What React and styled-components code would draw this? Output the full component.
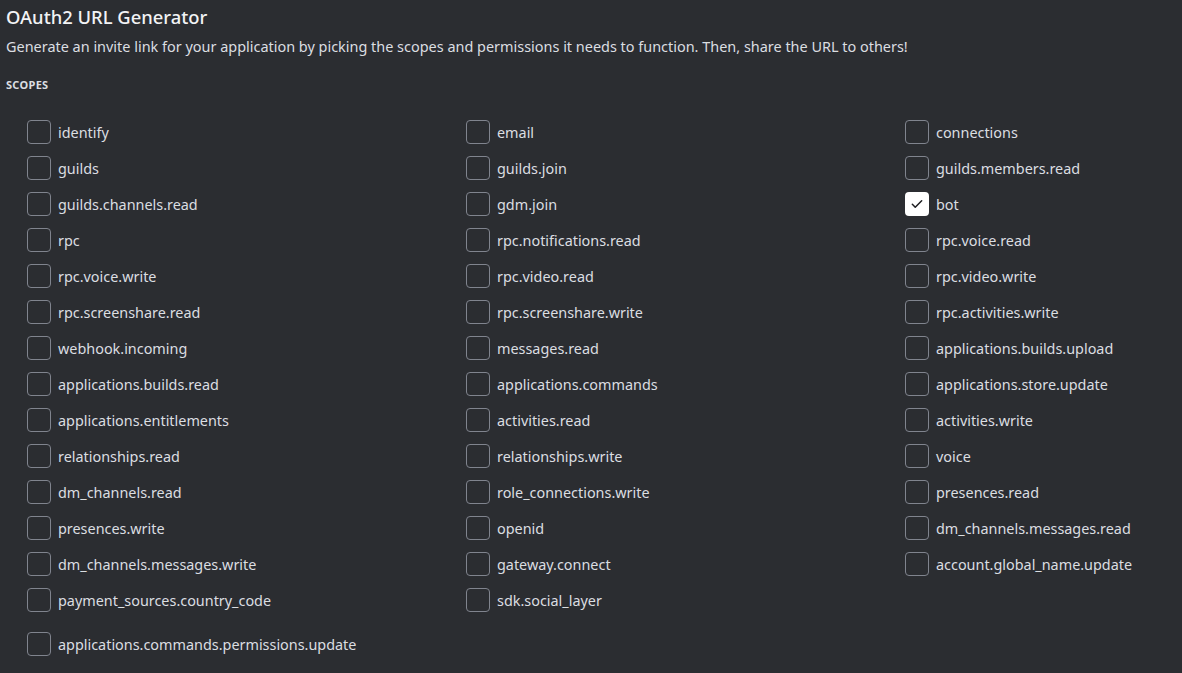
import React from "react";
import styled, { createGlobalStyle } from "styled-components";

const scopes = [
  ["identify", "email", "connections"],
  ["guilds", "guilds.join", "guilds.members.read"],
  ["guilds.channels.read", "gdm.join", "bot"],
  ["rpc", "rpc.notifications.read", "rpc.voice.read"],
  ["rpc.voice.write", "rpc.video.read", "rpc.video.write"],
  ["rpc.screenshare.read", "rpc.screenshare.write", "rpc.activities.write"],
  ["webhook.incoming", "messages.read", "applications.builds.upload"],
  ["applications.builds.read", "applications.commands", "applications.store.update"],
  ["applications.entitlements", "activities.read", "activities.write"],
  ["relationships.read", "relationships.write", "voice"],
  ["dm_channels.read", "role_connections.write", "presences.read"],
  ["presences.write", "openid", "dm_channels.messages.read"],
  ["dm_channels.messages.write", "gateway.connect", "account.global_name.update"],
  ["payment_sources.country_code", "sdk.social_layer"],
].flat();

const checked = ["bot"];

const GlobalStyle = createGlobalStyle`
  html, body {
    margin: 0;
    background: #2b2d31;
    font-family: "Noto Sans", "Liberation Sans", sans-serif;
  }
`;

const Page = styled.div`
  padding: 5px 6px 0;
  height: 673px;
  box-sizing: border-box;
  overflow: hidden;
`;

const Title = styled.h1`
  margin: 0;
  font-size: 18.4px;
  font-weight: 500;
  line-height: 24px;
  color: #f2f3f5;
`;

const Description = styled.p`
  margin: 9px 0 0;
  font-size: 14.45px;
  line-height: 18px;
  color: #dbdee1;
`;

const Heading = styled.h2`
  margin: 22px 0 0;
  font-size: 11px;
  font-weight: 700;
  line-height: 14px;
  letter-spacing: 0.3px;
  text-transform: uppercase;
  color: #dbdee1;
`;

const Grid = styled.div`
  display: grid;
  grid-template-columns: repeat(3, 439px);
  row-gap: 12px;
  margin-top: 28px;
  padding-left: 21px;
`;

const Option = styled.label`
  display: flex;
  align-items: center;
  gap: 7px;
  height: 24px;
  font-size: 14.4px;
  color: #dbdee1;
  white-space: nowrap;
  grid-column: ${(p) => (p.$full ? "1 / -1" : "auto")};
  margin-top: ${(p) => (p.$full ? "8px" : "0")};
`;

const Box = styled.span`
  flex: none;
  width: 24px;
  height: 24px;
  box-sizing: border-box;
  border-radius: 4px;
  border: ${(p) => (p.$on ? "none" : "1px solid #80848e")};
  background: ${(p) => (p.$on ? "#ffffff" : "transparent")};
  display: flex;
  align-items: center;
  justify-content: center;
`;

const Check = () => (
  <svg width="14" height="14" viewBox="0 0 24 24" fill="none">
    <path d="M4 12.5l5 5L20 6.5" stroke="#1e1f22" strokeWidth="2.6" strokeLinecap="round" strokeLinejoin="round" />
  </svg>
);

const ScopeOption = ({ name, full }) => {
  const on = checked.includes(name);
  return (
    <Option $full={full}>
      <Box $on={on}>{on && <Check />}</Box>
      {name}
    </Option>
  );
};

export default function App() {
  return (
    <Page>
      <GlobalStyle />
      <Title>OAuth2 URL Generator</Title>
      <Description>
        Generate an invite link for your application by picking the scopes and permissions it needs to function. Then, share the URL to others!
      </Description>
      <Heading>Scopes</Heading>
      <Grid>
        {scopes.map((s) => (
          <ScopeOption key={s} name={s} />
        ))}
        <ScopeOption name="applications.commands.permissions.update" full />
      </Grid>
    </Page>
  );
}
